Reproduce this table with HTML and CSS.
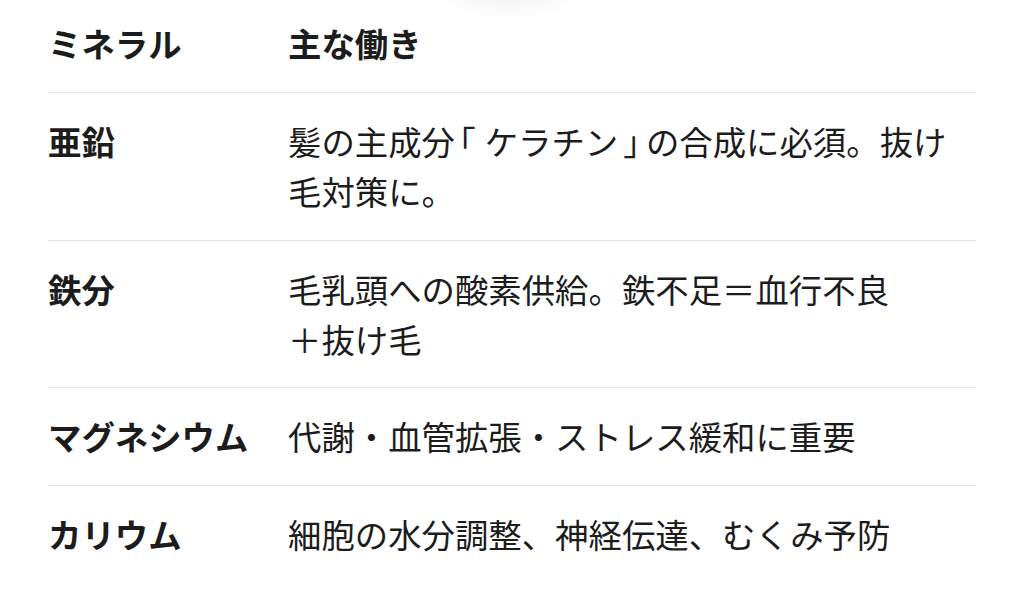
FILE: index.html
```html
<!DOCTYPE html>
<html lang="ja">
  <head>
    <meta charset="UTF-8">
    <title>ミネラルの働き</title>
    <link rel="stylesheet" href="styles.css">
  </head>
  <body>
    <div class="fab-shadow"></div>

    <table class="minerals">
      <thead>
        <tr>
          <th class="name">ミネラル</th>
          <th>主な働き</th>
        </tr>
      </thead>
      <tbody>
        <tr>
          <td class="name">亜鉛</td>
          <td><span class="line">髪の主成分<span class="br open">「</span>ケラチン<span class="br close">」</span>の合成に必須。抜け</span><br>毛対策に。</td>
        </tr>
        <tr>
          <td class="name">鉄分</td>
          <td><span class="line">毛乳頭への酸素供給。鉄不足＝血行不良</span><br>＋抜け毛</td>
        </tr>
        <tr>
          <td class="name">マグネシウム</td>
          <td>代謝・血管拡張・ストレス緩和に重要</td>
        </tr>
        <tr>
          <td class="name">カリウム</td>
          <td>細胞の水分調整、神経伝達、むくみ予防</td>
        </tr>
      </tbody>
    </table>
  </body>
</html>
```

FILE: styles.css
```css
html { margin: 0; padding: 0; background-color: white; }
body { margin: 0; padding: 0 48px; color: #1c1c1c;
       font-family: "Noto Sans CJK JP", "Noto Sans", sans-serif; font-size: 33.4px; line-height: 50px; }

.fab-shadow { position: absolute; left: 430px; top: -60px; width: 160px; height: 80px;
              border-radius: 50%; background: radial-gradient(ellipse at center, rgba(0,0,0,.07) 0%, rgba(0,0,0,.03) 45%, rgba(0,0,0,0) 70%); }

table.minerals { width: 100%; border-collapse: collapse; }

.minerals th, .minerals td { text-align: left; vertical-align: top; padding: 23px 0 23.5px 0; }
.minerals th { font-weight: bold; padding: 18px 0 24px 0; }
.minerals th.name, .minerals td.name { width: 240px; font-weight: bold; white-space: nowrap; }

.minerals thead tr, .minerals tbody tr { border-bottom: 1px solid #e4e4e4; }
.minerals tbody tr:last-child { border-bottom: none; }

.line { white-space: nowrap; }
span.br { font-feature-settings: "halt"; }
span.br.open { padding: 0 9px 0 4px; }
span.br.close { padding: 0 6px 0 5px; }
```
